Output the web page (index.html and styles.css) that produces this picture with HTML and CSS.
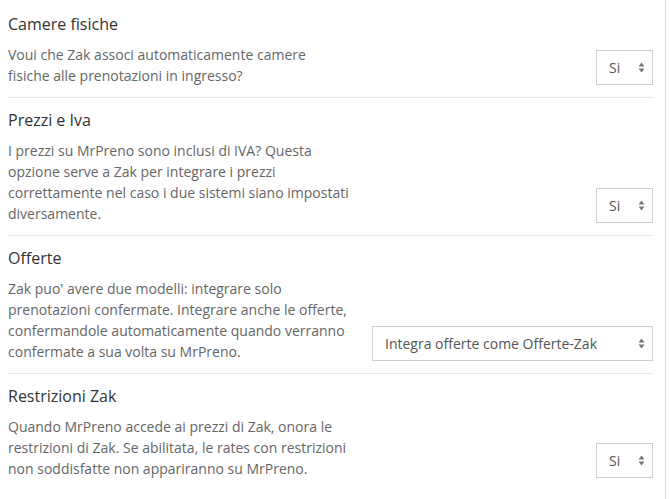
FILE: index.html
```html
<!DOCTYPE html>
<html lang="it">
<head>
<meta charset="UTF-8" />
<meta name="viewport" content="width=device-width, initial-scale=1" />
<title>Impostazioni MrPreno</title>
<link rel="stylesheet" href="styles.css">
</head>
<body>

<div class="panel">

  <div class="setting">
    <div class="setting-text narrow">
      <div class="setting-title">Camere fisiche</div>
      <p class="setting-desc">Voui che Zak associ automaticamente camere fisiche alle prenotazioni in ingresso?</p>
    </div>
    <div class="select-wrap small">
      <select>
        <option>Si</option>
        <option>No</option>
      </select>
      <svg class="arrows" width="7" height="11" viewBox="0 0 7 11"><path d="M3.5 0.5 L6.5 4.5 L0.5 4.5 Z M3.5 10.5 L6.5 6.5 L0.5 6.5 Z" /></svg>
    </div>
  </div>

  <div class="setting">
    <div class="setting-text">
      <div class="setting-title">Prezzi e Iva</div>
      <p class="setting-desc">I prezzi su MrPreno sono inclusi di IVA? Questa opzione serve a Zak per integrare i prezzi correttamente nel caso i due sistemi siano impostati diversamente.</p>
    </div>
    <div class="select-wrap small">
      <select>
        <option>Si</option>
        <option>No</option>
      </select>
      <svg class="arrows" width="7" height="11" viewBox="0 0 7 11"><path d="M3.5 0.5 L6.5 4.5 L0.5 4.5 Z M3.5 10.5 L6.5 6.5 L0.5 6.5 Z" /></svg>
    </div>
  </div>

  <div class="setting">
    <div class="setting-text">
      <div class="setting-title">Offerte</div>
      <p class="setting-desc">Zak puo' avere due modelli: integrare solo prenotazioni confermate. Integrare anche le offerte, confermandole automaticamente quando verranno confermate a sua volta su MrPreno.</p>
    </div>
    <div class="select-wrap wide">
      <select>
        <option>Integra offerte come Offerte-Zak</option>
        <option>Integra solo prenotazioni confermate</option>
      </select>
      <svg class="arrows" width="7" height="11" viewBox="0 0 7 11"><path d="M3.5 0.5 L6.5 4.5 L0.5 4.5 Z M3.5 10.5 L6.5 6.5 L0.5 6.5 Z" /></svg>
    </div>
  </div>

  <div class="setting last">
    <div class="setting-text">
      <div class="setting-title">Restrizioni Zak</div>
      <p class="setting-desc">Quando MrPreno accede ai prezzi di Zak, onora le restrizioni di Zak. Se abilitata, le rates con restrizioni non soddisfatte non appariranno su MrPreno.</p>
    </div>
    <div class="select-wrap small">
      <select>
        <option>Si</option>
        <option>No</option>
      </select>
      <svg class="arrows" width="7" height="11" viewBox="0 0 7 11"><path d="M3.5 0.5 L6.5 4.5 L0.5 4.5 Z M3.5 10.5 L6.5 6.5 L0.5 6.5 Z" /></svg>
    </div>
  </div>

</div>

</body>
</html>
```

FILE: styles.css
```css
body {
  margin: 0;
  background: #fff;
  font-family: "Open Sans", Arial, sans-serif;
  color: #333;
}

.panel {
  width: 666px;
  min-height: 499px;
  box-sizing: border-box;
  padding: 2px 12px 0 8px;
  border-right: 1px solid #dedede;
}

.setting {
  display: flex;
  justify-content: space-between;
  align-items: flex-end;
  padding: 11px 0 11px;
  border-bottom: 1px solid #e6e6e6;
}

.setting.last {
  border-bottom: none;
}

.setting-text {
  width: 349px;
}

.setting-text.narrow {
  width: 330px;
}

.setting-title {
  font-size: 16px;
  line-height: 22px;
  color: #333;
  margin-bottom: 9px;
}

.setting-desc {
  margin: 0;
  font-size: 14px;
  line-height: 21px;
  color: #666;
}

.select-wrap {
  position: relative;
  margin-bottom: 1px;
}

.select-wrap select {
  appearance: none;
  -webkit-appearance: none;
  display: block;
  height: 35px;
  box-sizing: border-box;
  border: 1px solid #cfcfcf;
  border-radius: 0;
  background: #fff;
  padding: 0 12px;
  font-family: "Open Sans", Arial, sans-serif;
  font-size: 14px;
  color: #555;
  outline: none;
}

.select-wrap.small select {
  width: 57px;
}

.select-wrap.wide select {
  width: 281px;
}

.arrows {
  position: absolute;
  right: 8px;
  top: 12px;
  fill: #777;
  pointer-events: none;
}
```
